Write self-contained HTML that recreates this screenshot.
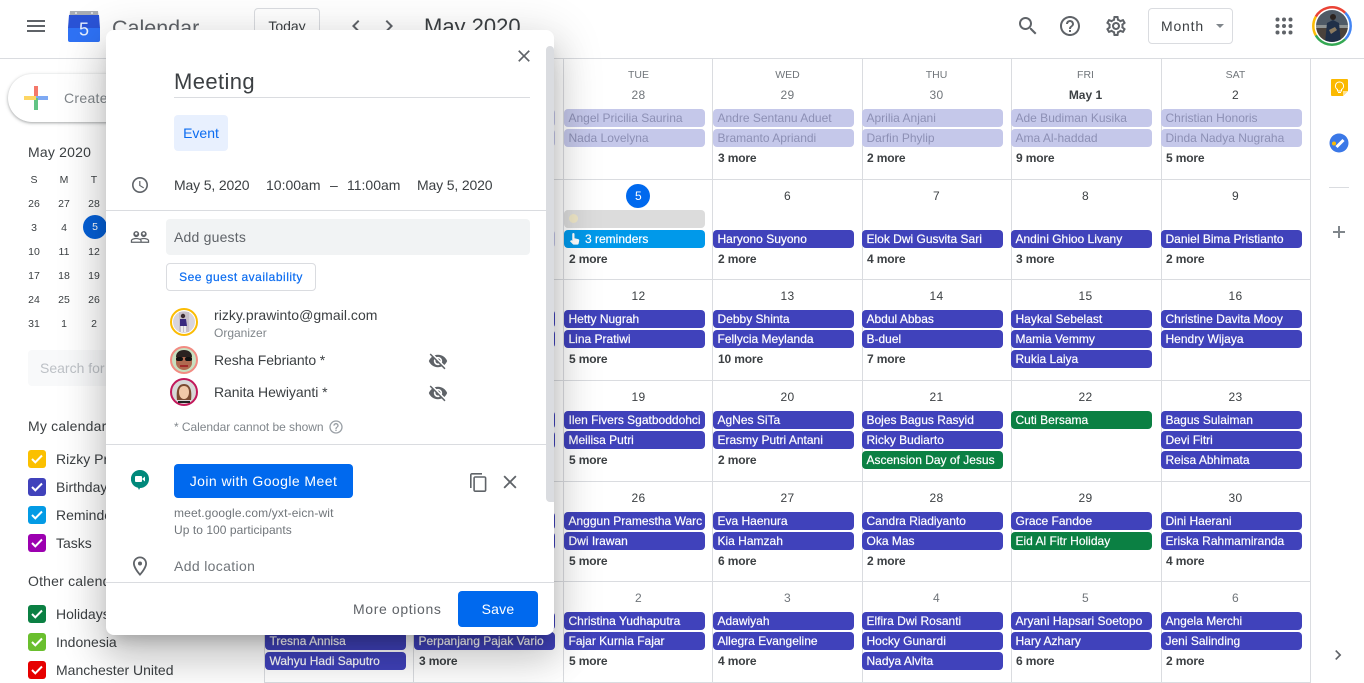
<!DOCTYPE html>
<html><head><meta charset="utf-8"><title>Calendar</title>
<style>
*{box-sizing:border-box}
html,body{margin:0;padding:0;width:1364px;height:683px;overflow:hidden;background:#fff;font-family:"Liberation Sans",sans-serif;color:#3c4043}
.t{position:absolute;white-space:nowrap;line-height:20px;height:20px}
svg{position:absolute;display:block}
.h{position:absolute;height:1px;background:#dadce0}
.v{position:absolute;width:1px;top:58px;bottom:0;background:#dadce0}
.row{position:absolute;left:0;width:1310px;height:90px}
.c0{left:265px}.c1{left:414px}.c2{left:564px}.c3{left:713px}.c4{left:862px}.c5{left:1011px}.c6{left:1161px}
.e,.m,.n{position:absolute;width:141px;height:18px;line-height:18px;font-size:12px;white-space:nowrap;overflow:hidden}
.e{background:#4042bb;color:#fff;border-radius:4px;padding-left:4.5px;-webkit-text-stroke:.2px}
.m{padding-left:5px;font-weight:bold;color:#3c4043;letter-spacing:-.15px}
.n{top:7px;width:149px;text-align:center;color:#3c4043;letter-spacing:.3px}
.g{color:#70757a}
.a{top:30px}.b{top:50px}.c{top:70px}
.f{background:#c5c8ea;color:#8d90b5;-webkit-text-stroke:0}
.gr{background:#0b8043}
.w{position:absolute;top:65px;width:149px;text-align:center;font-size:10.5px;color:#70757a;line-height:20px}
.mc{position:absolute;width:30px;text-align:center;font-size:10.5px;line-height:16px;color:#3c4043}
.cb{position:absolute;left:28px;width:18px;height:18px;border-radius:3px}
.cb svg{left:3px;top:4px}
.l{font-size:14px;left:56px;color:#3c4043}
#pop{position:absolute;left:106px;top:30px;width:448px;height:605px;background:#fff;border-radius:8px;box-shadow:0 24px 38px 3px rgba(0,0,0,.14),0 9px 46px 8px rgba(0,0,0,.12),0 11px 15px -7px rgba(0,0,0,.2);overflow:hidden}
</style></head><body>

<!-- header -->
<svg style="left:24px;top:14px" width="24" height="24" viewBox="0 0 24 24" fill="#5f6368"><path d="M3 18h18v-2H3v2zm0-5h18v-2H3v2zm0-7v2h18V6H3z"/></svg>
<svg style="left:68px;top:10px" width="32" height="32" viewBox="0 0 32 32"><path d="M2 1h28l1 10H1z" fill="#a9adb3"/><path d="M1 5h30l1 13H0z" fill="#2a53d6"/><path d="M0 18h32v12a2 2 0 0 1-2 2H2a2 2 0 0 1-2-2z" fill="#2f72f5"/><circle cx="8" cy="3" r="1" fill="#e8eaed"/><circle cx="24" cy="3" r="1" fill="#e8eaed"/><text x="16" y="25.500" text-anchor="middle" font-size="18" fill="#e8f0fe" font-family="Liberation Sans">5</text></svg>
<div class="t" style="left:112px;top:16px;font-size:21.5px;line-height:24px;height:24px;color:#5f6368">Calendar</div>
<div style="position:absolute;left:254px;top:8px;width:66px;height:36px;border:1px solid #dadce0;border-radius:4px"></div>
<div class="t" style="left:254px;width:66px;top:16px;text-align:center;font-size:14px">Today</div>
<svg style="left:344px;top:14px" width="24" height="24" viewBox="0 0 24 24" fill="#5f6368"><path d="M15.41 7.41L14 6l-6 6 6 6 1.41-1.41L10.83 12z"/></svg>
<svg style="left:377px;top:14px" width="24" height="24" viewBox="0 0 24 24" fill="#5f6368"><path d="M10 6L8.59 7.41 13.17 12l-4.58 4.58L10 18l6-6z"/></svg>
<div class="t" style="left:424px;top:15px;font-size:22px;line-height:24px;height:24px;color:#3c4043">May 2020</div>

<svg style="left:1016px;top:14px" width="24" height="24" viewBox="0 0 24 24" fill="#5f6368"><path d="M15.5 14h-.79l-.28-.27C15.41 12.59 16 11.11 16 9.5 16 5.91 13.09 3 9.5 3S3 5.91 3 9.5 5.91 16 9.5 16c1.61 0 3.09-.59 4.23-1.57l.27.28v.79l5 4.99L20.49 19l-4.99-5zm-6 0C7.01 14 5 11.99 5 9.5S7.01 5 9.5 5 14 7.01 14 9.5 11.99 14 9.5 14z"/></svg>
<svg style="left:1058px;top:14px" width="24" height="24" viewBox="0 0 24 24" fill="#5f6368"><path d="M11 18h2v-2h-2v2zm1-16C6.48 2 2 6.48 2 12s4.48 10 10 10 10-4.48 10-10S17.52 2 12 2zm0 18c-4.41 0-8-3.59-8-8s3.59-8 8-8 8 3.59 8 8-3.59 8-8 8zm0-14c-2.21 0-4 1.79-4 4h2c0-1.1.9-2 2-2s2 .9 2 2c0 2-3 1.75-3 5h2c0-2.25 3-2.5 3-5 0-2.21-1.79-4-4-4z"/></svg>
<svg style="left:1104px;top:14px" width="24" height="24" viewBox="0 0 24 24" fill="#5f6368"><path d="M19.43 12.98c.04-.32.07-.64.07-.98 0-.34-.03-.66-.07-.98l2.11-1.65c.19-.15.24-.42.12-.64l-2-3.46c-.09-.16-.26-.25-.44-.25-.06 0-.12.01-.17.03l-2.49 1c-.52-.4-1.08-.73-1.69-.98l-.38-2.65C14.46 2.18 14.25 2 14 2h-4c-.25 0-.46.18-.49.42l-.38 2.65c-.61.25-1.17.59-1.69.98l-2.49-1c-.06-.02-.12-.03-.18-.03-.17 0-.34.09-.43.25l-2 3.46c-.13.22-.07.49.12.64l2.11 1.65c-.04.32-.07.65-.07.98 0 .33.03.66.07.98l-2.11 1.65c-.19.15-.24.42-.12.64l2 3.46c.09.16.26.25.44.25.06 0 .12-.01.17-.03l2.49-1c.52.4 1.08.73 1.69.98l.38 2.65c.03.24.24.42.49.42h4c.25 0 .46-.18.49-.42l.38-2.65c.61-.25 1.17-.59 1.69-.98l2.49 1c.06.02.12.03.18.03.17 0 .34-.09.43-.25l2-3.46c.12-.22.07-.49-.12-.64l-2.11-1.65zm-1.98-1.71c.04.31.05.52.05.73 0 .21-.02.43-.05.73l-.14 1.13.89.7 1.08.84-.7 1.21-1.27-.51-1.04-.42-.9.68c-.43.32-.84.56-1.25.73l-1.06.43-.16 1.13-.2 1.35h-1.4l-.19-1.35-.16-1.13-1.06-.43c-.43-.18-.83-.41-1.23-.71l-.91-.7-1.06.43-1.27.51-.7-1.21 1.08-.84.89-.7-.14-1.13c-.03-.31-.05-.54-.05-.74s.02-.43.05-.73l.14-1.13-.89-.7-1.08-.84.7-1.21 1.27.51 1.04.42.9-.68c.43-.32.84-.56 1.25-.73l1.06-.43.16-1.13.2-1.35h1.39l.19 1.35.16 1.13 1.06.43c.43.18.83.41 1.23.71l.91.7 1.06-.43 1.27-.51.7 1.21-1.07.85-.89.7.14 1.13zM12 8c-2.21 0-4 1.79-4 4s1.79 4 4 4 4-1.79 4-4-1.79-4-4-4zm0 6c-1.1 0-2-.9-2-2s.9-2 2-2 2 .9 2 2-.9 2-2 2z"/></svg>
<div style="position:absolute;left:1148px;top:8px;width:85px;height:36px;border:1px solid #dadce0;border-radius:4px"></div>
<div class="t" style="left:1161px;top:16px;font-size:14px;letter-spacing:.8px">Month</div>
<div style="position:absolute;left:1216px;top:24px;width:0;height:0;border:4px solid transparent;border-top-color:#80868b;border-bottom:0"></div>
<svg style="left:1275px;top:17px" width="18" height="18" viewBox="0 0 18 18" fill="#5f6368"><circle cx="2.5" cy="2.5" r="2"/><circle cx="9" cy="2.5" r="2"/><circle cx="15.5" cy="2.5" r="2"/><circle cx="2.5" cy="9" r="2"/><circle cx="9" cy="9" r="2"/><circle cx="15.5" cy="9" r="2"/><circle cx="2.5" cy="15.5" r="2"/><circle cx="9" cy="15.5" r="2"/><circle cx="15.5" cy="15.5" r="2"/></svg>
<svg style="left:1312px;top:6px" width="40" height="40" viewBox="0 0 40 40"><clipPath id="av"><circle cx="20" cy="20" r="16"/></clipPath><g clip-path="url(#av)"><rect x="3" y="3" width="34" height="18" fill="#4f5a66"/><rect x="3" y="19" width="34" height="3" fill="#8f9494"/><rect x="3" y="22" width="34" height="15" fill="#4a423c"/><circle cx="21" cy="11" r="3" fill="#2b2320"/><path d="M15 17l6-3 6 3 2 20H13z" fill="#1f2f48"/><path d="M17 24l6-3 2 3-6 4z" fill="#8a7a60"/></g><g fill="none" stroke-width="2.500"><circle cx="20" cy="20" r="18.700" stroke="#ea4335" stroke-dasharray="34.300 120" transform="rotate(-150 20 20)"/><circle cx="20" cy="20" r="18.700" stroke="#4285f4" stroke-dasharray="29.400 120" transform="rotate(-45 20 20)"/><circle cx="20" cy="20" r="18.700" stroke="#34a853" stroke-dasharray="34.300 120" transform="rotate(45 20 20)"/><circle cx="20" cy="20" r="18.700" stroke="#fbbc04" stroke-dasharray="19.600 120" transform="rotate(150 20 20)"/></g></svg>

<div class="h" style="left:0;right:0;top:58px"></div>

<!-- sidebar -->
<div style="position:absolute;left:8px;top:74px;width:140px;height:48px;border-radius:24px;background:#fff;box-shadow:0 1px 2px 0 rgba(60,64,67,.3),0 1px 3px 1px rgba(60,64,67,.15)"></div>
<svg style="left:24px;top:86px" width="24" height="24" viewBox="0 0 24 24"><rect x="10" y="0" width="4" height="12" fill="#f4786a"/><rect x="12" y="10" width="12" height="4" fill="#7ea9f3"/><rect x="10" y="12" width="4" height="12" fill="#62c484"/><rect x="0" y="10" width="12" height="4" fill="#fdd663"/></svg>
<div class="t" style="left:64px;top:88px;font-size:14px;color:#80868b;letter-spacing:.3px">Create</div>
<div class="t" style="left:28px;top:142px;font-size:14px;letter-spacing:.2px">May 2020</div>

<div style="position:absolute;left:83px;top:215px;width:24px;height:24px;border-radius:50%;background:#0560d8"></div>
<div style="position:absolute;left:0;top:1px">
<div class="mc g" style="left:19px;top:171px">S</div><div class="mc g" style="left:49px;top:171px">M</div><div class="mc g" style="left:79px;top:171px">T</div>
<div class="mc g" style="left:19px;top:195px">26</div><div class="mc g" style="left:49px;top:195px">27</div><div class="mc g" style="left:79px;top:195px">28</div>
<div class="mc" style="left:19px;top:219px">3</div><div class="mc" style="left:49px;top:219px">4</div><div class="mc" style="left:80px;top:218px;color:#fff">5</div>
<div class="mc" style="left:19px;top:243px">10</div><div class="mc" style="left:49px;top:243px">11</div><div class="mc" style="left:79px;top:243px">12</div>
<div class="mc" style="left:19px;top:267px">17</div><div class="mc" style="left:49px;top:267px">18</div><div class="mc" style="left:79px;top:267px">19</div>
<div class="mc" style="left:19px;top:291px">24</div><div class="mc" style="left:49px;top:291px">25</div><div class="mc" style="left:79px;top:291px">26</div>
<div class="mc" style="left:19px;top:315px">31</div><div class="mc g" style="left:49px;top:315px">1</div><div class="mc g" style="left:79px;top:315px">2</div>
</div>

<div style="position:absolute;left:28px;top:350px;width:100px;height:36px;background:#f8f9fa;border-radius:4px"></div>
<div class="t" style="left:40px;top:358px;font-size:14px;color:#bdc1c6">Search for</div>

<div class="t" style="left:28px;top:416px;font-size:14px;letter-spacing:.2px">My calendars</div>
<div class="cb" style="top:450px;background:#fbc000"><svg width="12" height="10" viewBox="0 0 12 10"><path d="M1 5l3.3 3.3L11 1.5" fill="none" stroke="#fff" stroke-width="2"/></svg></div>
<div class="t l" style="top:449px">Rizky Prawinto</div>
<div class="cb" style="top:478px;background:#4042bb"><svg width="12" height="10" viewBox="0 0 12 10"><path d="M1 5l3.3 3.3L11 1.5" fill="none" stroke="#fff" stroke-width="2"/></svg></div>
<div class="t l" style="top:477px">Birthdays</div>
<div class="cb" style="top:506px;background:#039be5"><svg width="12" height="10" viewBox="0 0 12 10"><path d="M1 5l3.3 3.3L11 1.5" fill="none" stroke="#fff" stroke-width="2"/></svg></div>
<div class="t l" style="top:505px">Reminders</div>
<div class="cb" style="top:534px;background:#9c00b0"><svg width="12" height="10" viewBox="0 0 12 10"><path d="M1 5l3.3 3.3L11 1.5" fill="none" stroke="#fff" stroke-width="2"/></svg></div>
<div class="t l" style="top:533px">Tasks</div>
<div class="t" style="left:28px;top:571px;font-size:14px;letter-spacing:.2px">Other calendars</div>
<div class="cb" style="top:605px;background:#0b8043"><svg width="12" height="10" viewBox="0 0 12 10"><path d="M1 5l3.3 3.3L11 1.5" fill="none" stroke="#fff" stroke-width="2"/></svg></div>
<div class="t l" style="top:604px">Holidays</div>
<div class="cb" style="top:633px;background:#6abf2e"><svg width="12" height="10" viewBox="0 0 12 10"><path d="M1 5l3.3 3.3L11 1.5" fill="none" stroke="#fff" stroke-width="2"/></svg></div>
<div class="t l" style="top:632px">Indonesia</div>
<div class="cb" style="top:661px;background:#e60000"><svg width="12" height="10" viewBox="0 0 12 10"><path d="M1 5l3.3 3.3L11 1.5" fill="none" stroke="#fff" stroke-width="2"/></svg></div>
<div class="t l" style="top:660px">Manchester United</div>

<!-- grid -->
<div class="v" style="left:264px"></div><div class="v" style="left:413px"></div><div class="v" style="left:563px"></div><div class="v" style="left:712px"></div><div class="v" style="left:862px"></div><div class="v" style="left:1011px"></div><div class="v" style="left:1161px"></div><div class="v" style="left:1310px"></div>
<div class="h" style="left:264px;width:1047px;top:179px"></div><div class="h" style="left:264px;width:1047px;top:279px"></div><div class="h" style="left:264px;width:1047px;top:380px"></div><div class="h" style="left:264px;width:1047px;top:481px"></div><div class="h" style="left:264px;width:1047px;top:581px"></div><div class="h" style="left:264px;width:1047px;top:682px"></div>

<div class="w c2">TUE</div><div class="w c3">WED</div><div class="w c4">THU</div><div class="w c5">FRI</div><div class="w c6">SAT</div>

<div class="row" style="top:79px">
<div class="e f c1 a"></div><div class="e f c1 b"></div>
<div class="n g c2">28</div><div class="e f c2 a">Angel Pricilia Saurina</div><div class="e f c2 b">Nada Lovelyna</div>
<div class="n g c3">29</div><div class="e f c3 a">Andre Sentanu Aduet</div><div class="e f c3 b">Bramanto Apriandi</div><div class="m c3 c">3 more</div>
<div class="n g c4">30</div><div class="e f c4 a">Aprilia Anjani</div><div class="e f c4 b">Darfin Phylip</div><div class="m c4 c">2 more</div>
<div class="n c5" style="font-weight:bold;letter-spacing:0">May 1</div><div class="e f c5 a">Ade Budiman Kusika</div><div class="e f c5 b">Ama Al-haddad</div><div class="m c5 c">9 more</div>
<div class="n c6">2</div><div class="e f c6 a">Christian Honoris</div><div class="e f c6 b">Dinda Nadya Nugraha</div><div class="m c6 c">5 more</div>
</div>

<div class="row" style="top:180px">
<div class="e f c1 b"></div>
<div style="position:absolute;left:626px;top:4px;width:24px;height:24px;border-radius:50%;background:#0069ee"></div><div class="n c2" style="color:#fff">5</div>
<div class="e c2 a" style="background:#dcdcdc"></div><div style="position:absolute;left:569px;top:34px;width:9px;height:9px;border-radius:50%;background:#f0e8c8"></div>
<div class="e c2 b" style="background:#0099ea;padding-left:21px">3 reminders</div>
<svg style="left:569px;top:53px" width="11" height="12" viewBox="0 0 14 16" fill="#fff"><path d="M4 1.5a1.5 1.5 0 0 1 3 0V7l5 1.2c1 .3 1.5 1 1.3 2l-.8 4c-.2.8-.8 1.3-1.6 1.3H6c-.5 0-1-.2-1.300-.6L1 11l1-1c.4-.4 1-.4 1.400-.1L4 10.500z"/></svg>
<div class="m c2 c">2 more</div>
<div class="n c3">6</div><div class="e c3 b">Haryono Suyono</div><div class="m c3 c">2 more</div>
<div class="n c4">7</div><div class="e c4 b">Elok Dwi Gusvita Sari</div><div class="m c4 c">4 more</div>
<div class="n c5">8</div><div class="e c5 b">Andini Ghioo Livany</div><div class="m c5 c">3 more</div>
<div class="n c6">9</div><div class="e c6 b">Daniel Bima Pristianto</div><div class="m c6 c">2 more</div>
</div>

<div class="row" style="top:280px">
<div class="e c1 a"></div><div class="e c1 b"></div>
<div class="n c2">12</div><div class="e c2 a">Hetty Nugrah</div><div class="e c2 b">Lina Pratiwi</div><div class="m c2 c">5 more</div>
<div class="n c3">13</div><div class="e c3 a">Debby Shinta</div><div class="e c3 b">Fellycia Meylanda</div><div class="m c3 c">10 more</div>
<div class="n c4">14</div><div class="e c4 a">Abdul Abbas</div><div class="e c4 b">B-duel</div><div class="m c4 c">7 more</div>
<div class="n c5">15</div><div class="e c5 a">Haykal Sebelast</div><div class="e c5 b">Mamia Vemmy</div><div class="e c5 c">Rukia Laiya</div>
<div class="n c6">16</div><div class="e c6 a">Christine Davita Mooy</div><div class="e c6 b">Hendry Wijaya</div>
</div>

<div class="row" style="top:381px">
<div class="e c1 a"></div><div class="e c1 b"></div>
<div class="n c2">19</div><div class="e c2 a">Ilen Fivers Sgatboddohci</div><div class="e c2 b">Meilisa Putri</div><div class="m c2 c">5 more</div>
<div class="n c3">20</div><div class="e c3 a">AgNes SiTa</div><div class="e c3 b">Erasmy Putri Antani</div><div class="m c3 c">2 more</div>
<div class="n c4">21</div><div class="e c4 a">Bojes Bagus Rasyid</div><div class="e c4 b">Ricky Budiarto</div><div class="e gr c4 c">Ascension Day of Jesus</div>
<div class="n c5">22</div><div class="e gr c5 a">Cuti Bersama</div>
<div class="n c6">23</div><div class="e c6 a">Bagus Sulaiman</div><div class="e c6 b">Devi Fitri</div><div class="e c6 c">Reisa Abhimata</div>
</div>

<div class="row" style="top:482px">
<div class="e c1 a"></div><div class="e c1 b"></div>
<div class="n c2">26</div><div class="e c2 a">Anggun Pramestha Warc</div><div class="e c2 b">Dwi Irawan</div><div class="m c2 c">5 more</div>
<div class="n c3">27</div><div class="e c3 a">Eva Haenura</div><div class="e c3 b">Kia Hamzah</div><div class="m c3 c">6 more</div>
<div class="n c4">28</div><div class="e c4 a">Candra Riadiyanto</div><div class="e c4 b">Oka Mas</div><div class="m c4 c">2 more</div>
<div class="n c5">29</div><div class="e c5 a">Grace Fandoe</div><div class="e gr c5 b">Eid Al Fitr Holiday</div>
<div class="n c6">30</div><div class="e c6 a">Dini Haerani</div><div class="e c6 b">Eriska Rahmamiranda</div><div class="m c6 c">4 more</div>
</div>

<div class="row" style="top:582px">
<div class="e c0 a"></div><div class="e c0 b">Tresna Annisa</div><div class="e c0 c">Wahyu Hadi Saputro</div>
<div class="e c1 a"></div><div class="e c1 b">Perpanjang Pajak Vario</div><div class="m c1 c">3 more</div>
<div class="n g c2">2</div><div class="e c2 a">Christina Yudhaputra</div><div class="e c2 b">Fajar Kurnia Fajar</div><div class="m c2 c">5 more</div>
<div class="n g c3">3</div><div class="e c3 a">Adawiyah</div><div class="e c3 b">Allegra Evangeline</div><div class="m c3 c">4 more</div>
<div class="n g c4">4</div><div class="e c4 a">Elfira Dwi Rosanti</div><div class="e c4 b">Hocky Gunardi</div><div class="e c4 c">Nadya Alvita</div>
<div class="n g c5">5</div><div class="e c5 a">Aryani Hapsari Soetopo</div><div class="e c5 b">Hary Azhary</div><div class="m c5 c">6 more</div>
<div class="n g c6">6</div><div class="e c6 a">Angela Merchi</div><div class="e c6 b">Jeni Salinding</div><div class="m c6 c">2 more</div>
</div>

<!-- right panel -->
<svg style="left:1331px;top:79px" width="17" height="17" viewBox="0 0 17 17"><path d="M1 0h15a1 1 0 0 1 1 1v11l-5 5H1a1 1 0 0 1-1-1V1a1 1 0 0 1 1-1z" fill="#fbb900"/><path d="M12 17v-5h5z" fill="#fde293"/><path d="M8.500 3a4 4 0 0 0-2 7.500V12h4v-1.500a4 4 0 0 0-2-7.500z" fill="none" stroke="#fff" stroke-width="1"/><path d="M7 13.500h3" stroke="#fff"/></svg>
<svg style="left:1329px;top:133px" width="20" height="20" viewBox="0 0 20 20"><circle cx="10" cy="10" r="9.500" fill="#3b78e7"/><path d="M7.500 14l7-7" stroke="#fff" stroke-width="3"/><circle cx="5" cy="10.500" r="2" fill="#fbbc04"/></svg>
<div class="h" style="left:1329px;width:20px;top:187px"></div>
<svg style="left:1333px;top:226px" width="12" height="12" viewBox="0 0 12 12" fill="#80868b"><path d="M5 0h2v5h5v2H7v5H5V7H0V5h5z"/></svg>
<svg style="left:1328px;top:645px" width="20" height="20" viewBox="0 0 24 24" fill="#5f6368"><path d="M10 6L8.590 7.410 13.170 12l-4.580 4.580L10 18l6-6z"/></svg>

<!-- popup -->
<div id="pop">
<div style="position:absolute;left:440px;top:16px;width:8px;height:456px;background:#dadce0;border-radius:4px 4px 0 4px"></div>
<svg style="left:408px;top:16px" width="20" height="20" viewBox="0 0 24 24" fill="#5f6368"><path d="M19 6.410L17.590 5 12 10.590 6.410 5 5 6.410 10.590 12 5 17.590 6.410 19 12 13.410 17.590 19 19 17.590 13.410 12z"/></svg>
<div class="t" style="left:68px;top:38px;font-size:22px;line-height:28px;height:28px;letter-spacing:.4px">Meeting</div>
<div class="h" style="left:68px;width:356px;top:67px"></div>
<div style="position:absolute;left:68px;top:85px;width:54px;height:36px;background:#e8f0fe;border-radius:4px;text-align:center;line-height:36px;font-size:14px;color:#0b6cf0">Event</div>

<svg style="left:22px;top:143px" width="24" height="24" viewBox="0 0 24 24" fill="#5f6368"><path d="M11.990 4C7.570 4 4 7.580 4 12s3.570 8 7.990 8C16.420 20 20 16.420 20 12s-3.580-8-8.010-8zM12 18.400c-3.540 0-6.400-2.860-6.400-6.400S8.460 5.600 12 5.600s6.400 2.860 6.400 6.400-2.860 6.400-6.400 6.400zm.400-10.400h-1.200v4.800l4.200 2.520.6-.98-3.600-2.140z"/></svg>
<div class="t" style="left:68px;top:145px;font-size:14px;letter-spacing:-.15px">May 5, 2020</div>
<div class="t" style="left:160px;top:145px;font-size:14px">10:00am</div>
<div class="t" style="left:224px;top:145px;font-size:14px">–</div>
<div class="t" style="left:241px;top:145px;font-size:14px">11:00am</div>
<div class="t" style="left:311px;top:145px;font-size:14px;letter-spacing:-.15px">May 5, 2020</div>
<div class="h" style="left:0;width:440px;top:180px"></div>

<svg style="left:24px;top:197px" width="20" height="20" viewBox="0 0 24 24" fill="#5f6368"><path d="M16.500 13c-1.200 0-3.070.34-4.500 1-1.430-.67-3.300-1-4.500-1C5.330 13 1 14.080 1 16.250V19h22v-2.750c0-2.170-4.330-3.250-6.500-3.250zm-4 4.500h-10v-1.250c0-.54 2.560-1.750 5-1.750s5 1.210 5 1.750v1.250zm9 0H14v-1.250c0-.46-.2-.86-.52-1.220.88-.3 1.960-.53 3.020-.53 2.440 0 5 1.210 5 1.750v1.250zM7.500 12c1.930 0 3.500-1.570 3.500-3.500S9.430 5 7.500 5 4 6.570 4 8.500 5.570 12 7.500 12zm0-5.500c.83 0 1.500.67 1.500 1.500s-.67 1.500-1.500 1.500S6 8.830 6 8s.67-1.500 1.500-1.500zm9 5.500c1.930 0 3.500-1.570 3.500-3.500S18.430 5 16.500 5 13 6.570 13 8.500s1.570 3.500 3.500 3.500zm0-5.500c.83 0 1.500.67 1.500 1.500s-.67 1.500-1.500 1.500S15 8.830 15 8s.67-1.500 1.500-1.500z"/></svg>
<div style="position:absolute;left:60px;top:189px;width:364px;height:36px;background:#f1f3f4;border-radius:4px"></div>
<div class="t" style="left:68px;top:197px;font-size:14px;color:#5f6368;letter-spacing:.2px">Add guests</div>
<div style="position:absolute;left:60px;top:233px;width:150px;height:28px;border:1px solid #dadce0;border-radius:4px;text-align:center;line-height:26px;font-size:12px;color:#0b6cf0;letter-spacing:.5px;-webkit-text-stroke:.2px">See guest availability</div>

<svg style="left:64px;top:278px" width="28" height="28" viewBox="0 0 28 28"><circle cx="14" cy="14" r="13" fill="#fff" stroke="#fbbc04" stroke-width="2"/><circle cx="14" cy="14" r="11" fill="#d8d4dc"/><path d="M9 4h10v20H9z" fill="#c8c0c8"/><circle cx="13" cy="8" r="2.200" fill="#3a2a30"/><path d="M10 11h6l1 7h-7z" fill="#3a2a80"/><path d="M11 18h2v6h-2zM14 18h2v6h-2z" fill="#eeeeee"/></svg>
<div class="t" style="left:108px;top:275px;font-size:14px;letter-spacing:.04px">rizky.prawinto@gmail.com</div>
<div class="t" style="left:108px;top:293px;font-size:12px;color:#80868b">Organizer</div>

<svg style="left:64px;top:316px" width="28" height="28" viewBox="0 0 28 28"><circle cx="14" cy="14" r="13" fill="#c8e0c0" stroke="#f28b82" stroke-width="2"/><path d="M6 13c0-6 4-8 8-8s8 2 8 8v4c0 4-4 7-8 7s-8-3-8-7z" fill="#b06a50"/><path d="M6 11c0-5 4-7 8-7s8 2 8 7z" fill="#2a2220"/><rect x="6" y="11" width="7" height="4" rx="2" fill="#111"/><rect x="15" y="11" width="7" height="4" rx="2" fill="#111"/><path d="M10 19h8v2h-8z" fill="#a02a2a"/></svg>
<div class="t" style="left:108px;top:320px;font-size:14px;letter-spacing:-.1px">Resha Febrianto *</div>
<svg style="left:322px;top:321px" width="20" height="20" viewBox="0 0 24 24" fill="#5f6368"><path d="M12 7c2.760 0 5 2.240 5 5 0 .65-.13 1.260-.36 1.830l2.920 2.920c1.510-1.260 2.700-2.890 3.430-4.750-1.730-4.390-6-7.500-11-7.500-1.400 0-2.740.25-3.980.7l2.160 2.160C10.740 7.130 11.350 7 12 7zM2 4.270l2.280 2.280.46.46C3.080 8.300 1.780 10.020 1 12c1.730 4.390 6 7.500 11 7.500 1.550 0 3.030-.3 4.380-.84l.42.42L19.730 22 21 20.730 3.270 3 2 4.270zM7.530 9.800l1.550 1.550c-.05.21-.08.43-.08.65 0 1.660 1.340 3 3 3 .22 0 .44-.03.65-.08l1.550 1.550c-.67.33-1.410.53-2.200.53-2.760 0-5-2.240-5-5 0-.79.2-1.530.53-2.200zm4.310-.78l3.150 3.150.02-.16c0-1.660-1.340-3-3-3l-.17.01z"/></svg>

<svg style="left:64px;top:348px" width="28" height="28" viewBox="0 0 28 28"><circle cx="14" cy="14" r="13" fill="#d8d8d8" stroke="#c2185b" stroke-width="2"/><path d="M7 22c-1-8 0-16 7-16s8 8 7 16z" fill="#7a4a30"/><path d="M9 14c0-4 2-6 5-6s5 2 5 6-2 7-5 7-5-3-5-7z" fill="#f0c8a8"/><path d="M8 23h12v2H8z" fill="#222"/></svg>
<div class="t" style="left:108px;top:352px;font-size:14px;letter-spacing:-.05px">Ranita Hewiyanti *</div>
<svg style="left:322px;top:353px" width="20" height="20" viewBox="0 0 24 24" fill="#5f6368"><path d="M12 7c2.760 0 5 2.240 5 5 0 .65-.13 1.260-.36 1.830l2.920 2.920c1.510-1.260 2.700-2.890 3.430-4.750-1.730-4.390-6-7.500-11-7.500-1.400 0-2.740.25-3.980.7l2.160 2.160C10.740 7.130 11.350 7 12 7zM2 4.270l2.280 2.280.46.46C3.080 8.300 1.780 10.020 1 12c1.730 4.390 6 7.500 11 7.500 1.550 0 3.030-.3 4.380-.84l.42.42L19.730 22 21 20.730 3.270 3 2 4.270zM7.530 9.800l1.550 1.550c-.05.21-.08.43-.08.65 0 1.660 1.340 3 3 3 .22 0 .44-.03.65-.08l1.550 1.550c-.67.33-1.410.53-2.200.53-2.760 0-5-2.240-5-5 0-.79.2-1.530.53-2.200zm4.310-.78l3.150 3.150.02-.16c0-1.660-1.340-3-3-3l-.17.01z"/></svg>

<div class="t" style="left:68px;top:387px;font-size:12px;color:#80868b;letter-spacing:-.05px">* Calendar cannot be shown</div>
<svg style="left:222px;top:389px" width="16" height="16" viewBox="0 0 24 24" fill="#9aa0a6"><path d="M11 18h2v-2h-2v2zm1-16C6.480 2 2 6.480 2 12s4.480 10 10 10 10-4.480 10-10S17.520 2 12 2zm0 18c-4.410 0-8-3.590-8-8s3.590-8 8-8 8 3.590 8 8-3.590 8-8 8zm0-14c-2.210 0-4 1.790-4 4h2c0-1.100.9-2 2-2s2 .9 2 2c0 2-3 1.750-3 5h2c0-2.250 3-2.500 3-5 0-2.210-1.790-4-4-4z"/></svg>
<div class="h" style="left:0;width:440px;top:414px"></div>

<svg style="left:25px;top:440px" width="18" height="20" viewBox="0 0 18 20"><path d="M9 0a9 9 0 0 1 0 18l-1 2-1-2.200A9 9 0 0 1 9 0z" fill="#00897b"/><rect x="4" y="6" width="7" height="6" rx="1" fill="#fff"/><path d="M11 9l3-2.500v5z" fill="#fff"/></svg>
<div style="position:absolute;left:68px;top:434px;width:179px;height:34px;background:#0069ee;border-radius:4px;text-align:center;line-height:34px;font-size:14px;color:#fff;letter-spacing:.43px">Join with Google Meet</div>
<svg style="left:360px;top:440px" width="24" height="24" viewBox="0 0 24 24" fill="#5f6368"><path d="M16 3H6c-1.100 0-2 .9-2 2v13h1.600V4.600H16zm2.500 3.200H9.200c-1.100 0-1.900.9-1.900 1.900v12c0 1.100.9 1.900 1.900 1.900h9.300c1.100 0 1.900-.9 1.900-1.900v-12c0-1-.8-1.900-1.900-1.900zm.3 14.200H8.900V7.800h9.900z"/></svg>
<svg style="left:392px;top:440px" width="24" height="24" viewBox="0 0 24 24" fill="#5f6368"><path d="M18.500 6.800L17.200 5.500 12 10.700 6.800 5.500 5.500 6.800 10.700 12l-5.200 5.200 1.300 1.300 5.200-5.200 5.200 5.200 1.300-1.300-5.200-5.200z"/></svg>
<div class="t" style="left:68px;top:473px;font-size:12px;color:#70757a;letter-spacing:.15px">meet.google.com/yxt-eicn-wit</div>
<div class="t" style="left:68px;top:490px;font-size:12px;color:#70757a;letter-spacing:.05px">Up to 100 participants</div>

<svg style="left:22px;top:524px" width="24" height="24" viewBox="0 0 24 24" fill="#5f6368"><path d="M12 2.500C8.130 2.500 5 5.630 5 9.500c0 5.250 7 12.500 7 12.500s7-7.250 7-12.500c0-3.870-3.130-7-7-7zM6.800 9.500c0-2.870 2.330-5.200 5.200-5.200s5.200 2.330 5.200 5.200c0 2.880-3.080 7.190-5.200 9.880C9.920 16.710 6.800 12.350 6.800 9.500z"/><circle cx="12" cy="9.500" r="2"/></svg>
<div class="t" style="left:68px;top:526px;font-size:14px;color:#70757a;letter-spacing:.35px">Add location</div>
<div class="h" style="left:0;width:448px;top:552px"></div>
<div class="t" style="left:247px;top:569px;font-size:14px;color:#5f6368;letter-spacing:.63px">More options</div>
<div style="position:absolute;left:352px;top:561px;width:80px;height:36px;background:#0069ee;border-radius:4px;text-align:center;line-height:36px;font-size:14px;color:#fff;letter-spacing:.2px">Save</div>
</div>
</body></html>
